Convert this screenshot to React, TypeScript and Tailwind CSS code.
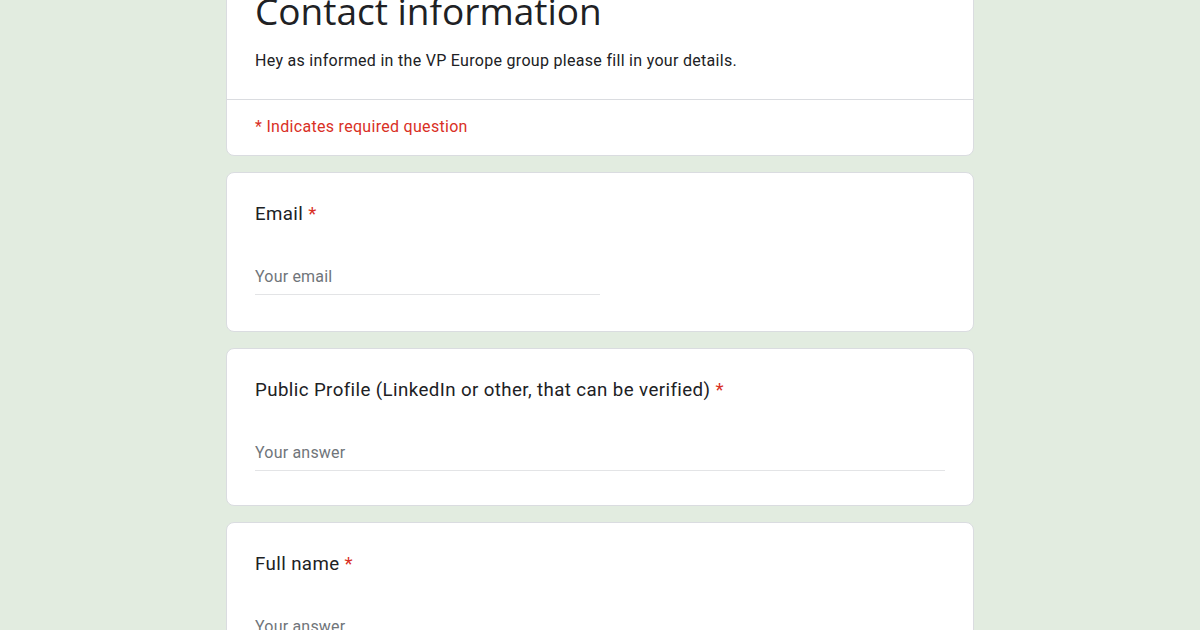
import React from "react";

function Req() {
  return <span className="text-[#d93025]"> *</span>;
}

function Question({
  title,
  placeholder,
  half,
  pb,
}: {
  title: string;
  placeholder: string;
  half?: boolean;
  pb: string;
}) {
  return (
    <div className={`rounded-[8px] border border-[#dadce0] bg-white px-[28px] pt-[27px] ${pb}`}>
      <div className="text-[18.7px] leading-[28px] text-[#202124] tracking-[0.4px]">
        {title}
        <Req />
      </div>
      <div className={`mt-[39px] ${half ? "w-1/2" : "w-full"}`}>
        <div className="pb-[7px] text-[16px] leading-[20px] text-[#70757a] tracking-[0.2px]">
          {placeholder}
        </div>
        <div className="h-[1px] bg-[#e3e4e6]" />
      </div>
    </div>
  );
}

export default function App() {
  return (
    <div
      className="min-h-[630px] w-full bg-[#e2ece0] overflow-hidden"
      style={{ fontFamily: "Roboto, 'Liberation Sans', sans-serif" }}
    >
      <div className="mx-auto w-[748px] -mt-[54px] flex flex-col gap-[16px]">
        <div className="rounded-[8px] border border-[#dadce0] bg-white">
          <div className="px-[28px] pt-[40px] pb-[26px]">
            <div
              className="text-[37px] leading-[48px] text-[#202124]"
              style={{ fontFamily: "'Open Sans', Roboto, sans-serif" }}
            >
              Contact information
            </div>
            <div className="mt-[14px] text-[16px] leading-[24px] text-[#202124] tracking-[0.3px]">
              Hey as informed in the VP Europe group please fill in your details.
            </div>
          </div>
          <div className="h-[1px] bg-[#dadce0]" />
          <div className="px-[28px] pt-[17px] pb-[18px] text-[16px] leading-[20px] text-[#d93025] tracking-[0.3px]">
            * Indicates required question
          </div>
        </div>
        <Question title="Email" placeholder="Your email" half pb="pb-[36px]" />
        <Question
          title="Public Profile (LinkedIn or other, that can be verified)"
          placeholder="Your answer"
          pb="pb-[34px]"
        />
        <Question title="Full name" placeholder="Your answer" pb="pb-[36px]" />
      </div>
    </div>
  );
}
